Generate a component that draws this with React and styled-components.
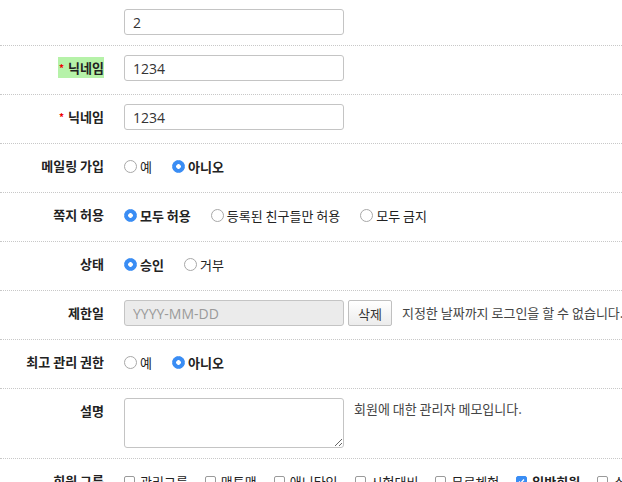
import styled, { createGlobalStyle } from 'styled-components';

const GlobalStyle = createGlobalStyle`
    body {
        margin: 0;
        overflow: hidden;
        background: #fff;
        font-family: "Open Sans", "Noto Sans CJK KR", sans-serif;
        color: #333;
    }
`;

const Form = styled.div`
    width: 100%;
    white-space: nowrap;
`;

const Row = styled.div`
    display: flex;
    padding: 9px 0 ${(p) => (p.$first ? '7px' : '10px')};
    border-bottom: 1px dotted #c8c8c8;
`;

const Label = styled.div`
    width: 104px;
    flex-shrink: 0;
    margin-right: 20px;
    text-align: right;
    font-family: "Noto Sans CJK KR", sans-serif;
    font-size: 13px;
    font-weight: 700;
    line-height: 26px;
    color: #222;
`;

const Mark = styled.span`
    background: ${(p) => (p.$highlight ? '#b6f2a9' : 'transparent')};
    padding: 1px 0 1px 1px;
`;

const Star = styled.span`
    color: #e00;
    font-size: 10px;
    margin-right: 4px;
    vertical-align: 1px;
`;

const Field = styled.div`
    display: flex;
    align-items: flex-start;
    min-height: 29px;
`;

const TextInput = styled.input`
    box-sizing: border-box;
    width: 220px;
    height: 26px;
    padding: 0 8px;
    border: 1px solid #c4c4c4;
    border-radius: 3px;
    background: ${(p) => (p.readOnly ? '#ebebeb' : '#fff')};
    font-family: "Open Sans", "Noto Sans CJK KR", sans-serif;
    font-size: 14px;
    color: #333;
    outline: none;

    &::placeholder {
        color: #9a9a9a;
    }
`;

const TextArea = styled.textarea`
    box-sizing: border-box;
    width: 220px;
    height: 50px;
    margin: 0;
    border: 1px solid #c4c4c4;
    border-radius: 3px;
    background: #fff;
    outline: none;
`;

const Button = styled.button`
    box-sizing: border-box;
    height: 26px;
    margin-left: 4px;
    padding: 0 9px;
    border: 1px solid #c0c0c0;
    border-radius: 2px;
    background: linear-gradient(#fff, #ececec);
    font-family: "Noto Sans CJK KR", sans-serif;
    font-size: 13px;
    color: #333;
`;

const Help = styled.span`
    margin-left: 10px;
    font-family: "Noto Sans CJK KR", sans-serif;
    font-size: 13px;
    line-height: ${(p) => (p.$top ? '22px' : '26px')};
    color: #444;
`;

const Options = styled.div`
    display: flex;
    align-items: center;
    height: 26px;
`;

const Option = styled.label`
    display: inline-flex;
    align-items: center;
    margin-right: ${(p) => (p.$box ? '17px' : '20px')};
    font-family: "Noto Sans CJK KR", sans-serif;
    font-size: 13px;
    font-weight: ${(p) => (p.$on ? 700 : 400)};
    color: #222;
`;

const Radio = styled.input.attrs({ type: 'radio' })`
    appearance: none;
    box-sizing: border-box;
    width: 13px;
    height: 13px;
    margin: 0 3px 0 0;
    border: 1px solid #a8a8a8;
    border-radius: 50%;
    background: #fff;

    &:checked {
        border-color: #3a8df4;
        background: radial-gradient(circle, #fff 0 2px, #3a8df4 2.6px);
    }
`;

const Check = styled.input.attrs({ type: 'checkbox' })`
    appearance: none;
    box-sizing: border-box;
    width: 11px;
    height: 11px;
    margin: 0 5px 0 0;
    border: 1px solid #9a9a9a;
    border-radius: 2px;
    background: #fff;

    &:checked {
        border-color: #3a8df4;
        background: #3a8df4 url("data:image/svg+xml,%3Csvg xmlns='http://www.w3.org/2000/svg' viewBox='0 0 11 11'%3E%3Cpath d='M2.5 5.5l2 2 4-4.5' fill='none' stroke='white' stroke-width='1.6'/%3E%3C/svg%3E") center / 100% no-repeat;
    }
`;

function RadioGroup({ name, items, value }) {
    return (
        <Options>
            {items.map((item) => (
                <Option key={item} $on={item === value}>
                    <Radio name={name} defaultChecked={item === value} />
                    {item}
                </Option>
            ))}
        </Options>
    );
}

const groups = ['관리그룹', '맨투맨', '애니타임', '시험대비', '무료체험', '일반회원', '소속회원'];

export default function App() {
    return (
        <>
            <GlobalStyle />
            <Form>
                <Row $first>
                    <Label />
                    <Field>
                        <TextInput defaultValue="2" />
                    </Field>
                </Row>
                <Row>
                    <Label>
                        <Mark $highlight><Star>*</Star>닉네임</Mark>
                    </Label>
                    <Field>
                        <TextInput defaultValue="1234" />
                    </Field>
                </Row>
                <Row>
                    <Label>
                        <Mark><Star>*</Star>닉네임</Mark>
                    </Label>
                    <Field>
                        <TextInput defaultValue="1234" />
                    </Field>
                </Row>
                <Row>
                    <Label>메일링 가입</Label>
                    <Field>
                        <RadioGroup name="mailing" items={['예', '아니오']} value="아니오" />
                    </Field>
                </Row>
                <Row>
                    <Label>쪽지 허용</Label>
                    <Field>
                        <RadioGroup
                            name="message"
                            items={['모두 허용', '등록된 친구들만 허용', '모두 금지']}
                            value="모두 허용"
                        />
                    </Field>
                </Row>
                <Row>
                    <Label>상태</Label>
                    <Field>
                        <RadioGroup name="status" items={['승인', '거부']} value="승인" />
                    </Field>
                </Row>
                <Row>
                    <Label>제한일</Label>
                    <Field>
                        <TextInput readOnly placeholder="YYYY-MM-DD" />
                        <Button>삭제</Button>
                        <Help>지정한 날짜까지 로그인을 할 수 없습니다.</Help>
                    </Field>
                </Row>
                <Row>
                    <Label>최고 관리 권한</Label>
                    <Field>
                        <RadioGroup name="admin" items={['예', '아니오']} value="아니오" />
                    </Field>
                </Row>
                <Row>
                    <Label>설명</Label>
                    <Field>
                        <TextArea />
                        <Help $top>회원에 대한 관리자 메모입니다.</Help>
                    </Field>
                </Row>
                <Row>
                    <Label>회원 그룹</Label>
                    <Field>
                        <Options>
                            {groups.map((g) => (
                                <Option key={g} $box $on={g === '일반회원'}>
                                    <Check defaultChecked={g === '일반회원'} />
                                    {g}
                                </Option>
                            ))}
                        </Options>
                    </Field>
                </Row>
            </Form>
        </>
    );
}
